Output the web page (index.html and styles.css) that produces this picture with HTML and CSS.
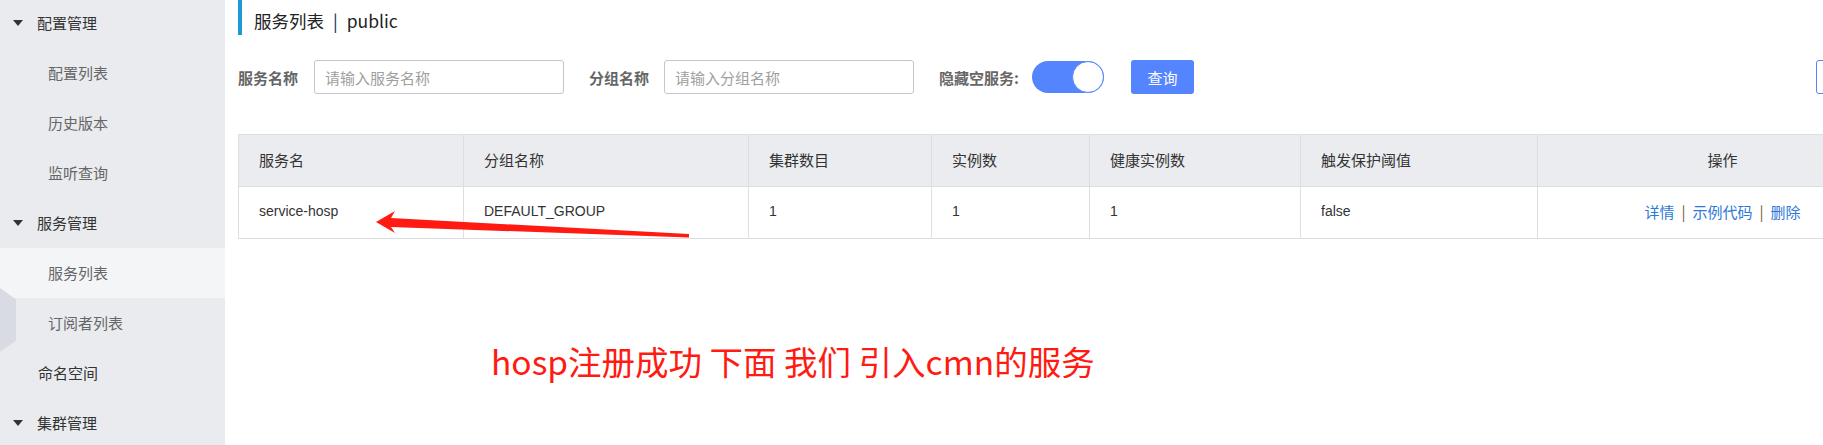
FILE: index.html
```html
<!DOCTYPE html>
<html lang="zh-CN">
<head>
<meta charset="utf-8">
<title>服务列表</title>
<link rel="stylesheet" href="styles.css">
</head>
<body>
<div class="page">
  <aside class="sidebar">
    <nav class="nav">
      <div class="nav-group"><span class="caret"></span>配置管理</div>
      <div class="nav-item">配置列表</div>
      <div class="nav-item">历史版本</div>
      <div class="nav-item">监听查询</div>
      <div class="nav-group"><span class="caret"></span>服务管理</div>
      <div class="nav-item active">服务列表</div>
      <div class="nav-item">订阅者列表</div>
      <div class="nav-group plain">命名空间</div>
      <div class="nav-group"><span class="caret"></span>集群管理</div>
    </nav>
    <div class="collapse-handle"></div>
  </aside>
  <main class="main">
    <div class="page-title"><span>服务列表</span><span class="sep">|</span><span>public</span></div>
    <div class="filters">
      <label class="f-label">服务名称</label>
      <input class="f-input" type="text" placeholder="请输入服务名称">
      <label class="f-label gap">分组名称</label>
      <input class="f-input" type="text" placeholder="请输入分组名称">
      <label class="f-label gap2">隐藏空服务:</label>
      <span class="switch"><span class="knob"></span></span>
      <button class="btn-primary">查询</button>
      <button class="btn-outline" aria-label="创建服务"></button>
    </div>
    <table class="grid">
      <colgroup>
        <col class="c1"><col class="c2"><col class="c3"><col class="c4"><col class="c5"><col class="c6"><col class="c7">
      </colgroup>
      <thead>
        <tr><th>服务名</th><th>分组名称</th><th>集群数目</th><th>实例数</th><th>健康实例数</th><th>触发保护阈值</th><th class="center">操作</th></tr>
      </thead>
      <tbody>
        <tr>
          <td>service-hosp</td><td>DEFAULT_GROUP</td><td>1</td><td>1</td><td>1</td><td>false</td>
          <td class="center ops"><a class="link">详情</a><span class="bar">|</span><a class="link">示例代码</a><span class="bar">|</span><a class="link">删除</a></td>
        </tr>
      </tbody>
    </table>
    <p class="note">hosp注册成功 下面 我们 引入cmn的服务</p>
  </main>
  <svg class="arrow" width="1823" height="445" viewBox="0 0 1823 445">
    <path d="M376 222 L395 211 L391 218 L689 234 L689 237.5 L391 227 L395 233 Z" fill="#ff1a12"/>
  </svg>
</div>
</body>
</html>
```
FILE: styles.css
```css
html, body {
  margin: 0;
  padding: 0;
  background: #fff;
}
body {
  font-family: "Noto Sans CJK SC", "Noto Sans", sans-serif;
  color: #333;
  overflow: hidden;
  width: 1823px;
  height: 445px;
}
.page {
  position: relative;
  display: flex;
  width: 1823px;
  height: 445px;
  overflow: hidden;
}
.sidebar {
  position: relative;
  flex: none;
  width: 225px;
  height: 445px;
  background: #e9ebef;
}
.nav {
  margin-top: -2px;
}
.nav-group, .nav-item {
  height: 50px;
  line-height: 50px;
  font-size: 15px;
  white-space: nowrap;
}
.nav-group {
  display: flex;
  align-items: center;
  padding-left: 13px;
  color: #333;
}
.nav-group.plain {
  padding-left: 38px;
}
.caret {
  width: 0;
  height: 0;
  border-left: 5.5px solid transparent;
  border-right: 5.5px solid transparent;
  border-top: 6px solid #333;
  margin-right: 14px;
}
.nav-item {
  padding-left: 48px;
  color: #666;
}
.nav-item.active {
  background: #f4f5f7;
}
.collapse-handle {
  position: absolute;
  left: 0;
  top: 288px;
  width: 16px;
  height: 64px;
  background: #d8dbe1;
  clip-path: polygon(0 0, 100% 18%, 100% 82%, 0 100%);
}
.main {
  flex: none;
  width: 1669px;
  padding-left: 13px;
}
.page-title {
  box-sizing: border-box;
  height: 35px;
  padding-top: 7px;
  padding-left: 12px;
  line-height: 27px;
  border-left: 4px solid #1b9ad6;
  font-size: 17.5px;
  color: #222;
  white-space: nowrap;
}
.page-title .sep {
  margin: 0 9px;
  color: #1c2a4a;
}
.filters {
  display: flex;
  align-items: center;
  height: 34px;
  margin-top: 25px;
}
.f-label {
  font-size: 15px;
  font-weight: bold;
  color: #666;
  margin-right: 16px;
  white-space: nowrap;
}
.f-label.gap {
  margin-left: 25px;
  margin-right: 15px;
}
.f-label.gap2 {
  margin-left: 25px;
  margin-right: 13px;
}
.f-input {
  box-sizing: border-box;
  width: 250px;
  height: 34px;
  border: 1px solid #c4c6cf;
  border-radius: 3px;
  padding: 0 10px;
  font-family: inherit;
  font-size: 15px;
  color: #333;
  outline: none;
}
.f-input::placeholder {
  color: #a0a0a0;
}
.switch {
  position: relative;
  box-sizing: border-box;
  width: 72px;
  height: 32px;
  border-radius: 16px;
  background: #5584ff;
  display: flex;
  justify-content: flex-end;
  align-items: center;
}
.knob {
  box-sizing: border-box;
  width: 32px;
  height: 32px;
  border-radius: 50%;
  background: #fff;
  border: 1px solid #5584ff;
}
.btn-primary {
  margin-left: 27px;
  width: 63px;
  height: 34px;
  border: none;
  border-radius: 3px;
  background: #5584ff;
  color: #fff;
  font-family: inherit;
  font-size: 15px;
  padding: 0;
}
.btn-outline {
  margin-left: auto;
  width: 91px;
  height: 34px;
  border: 1px solid #5584ff;
  border-radius: 3px;
  background: #fff;
  padding: 0;
}
.grid {
  margin-top: 40px;
  width: 1669px;
  table-layout: fixed;
  border-collapse: collapse;
  border: 1px solid #dcdee3;
  font-size: 15px;
}
.grid col.c1 { width: 225px; }
.grid col.c2 { width: 285px; }
.grid col.c3 { width: 183px; }
.grid col.c4 { width: 158px; }
.grid col.c5 { width: 211px; }
.grid col.c6 { width: 237px; }
.grid col.c7 { width: 370px; }
.grid th, .grid td {
  border: 1px solid #dcdee3;
  padding: 0 20px 3px;
  height: 48px;
  text-align: left;
  white-space: nowrap;
  color: #333;
}
.grid th {
  background: #ebecf0;
  font-weight: normal;
}
.grid td {
  font-family: "Liberation Sans", "Noto Sans CJK SC", sans-serif;
  font-size: 14px;
}
.grid td.ops {
  font-family: "Noto Sans CJK SC", sans-serif;
  font-size: 15px;
}
.grid .center {
  text-align: center;
}
.link {
  color: #2d78d8;
}
.bar {
  margin: 0 7px;
  color: #7a5a3a;
}
.note {
  margin: 100px 0 0 253px;
  font-size: 33.5px;
  line-height: 44px;
  color: #ff1a12;
  white-space: nowrap;
}
.arrow {
  position: absolute;
  left: 0;
  top: 0;
  pointer-events: none;
}
```
